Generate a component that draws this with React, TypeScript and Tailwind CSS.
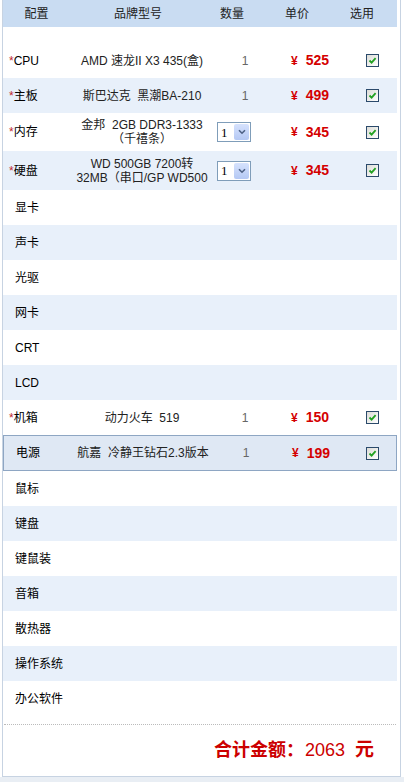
import React from "react";

type Row = {
  name: string;
  star?: boolean;
  product?: string[];
  qty?: string;
  select?: boolean;
  price?: string;
  checked?: boolean;
  h: string;
};

const rows: Row[] = [
  { name: "CPU", star: true, product: ["AMD 速龙II X3 435(盒)"], qty: "1", price: "525", checked: true, h: "h-[35px]" },
  { name: "主板", star: true, product: ["斯巴达克  黑潮BA-210"], qty: "1", price: "499", checked: true, h: "h-[35px]" },
  { name: "内存", star: true, product: ["金邦  2GB DDR3-1333", "（千禧条）"], select: true, price: "345", checked: true, h: "h-[38px]" },
  { name: "硬盘", star: true, product: ["WD 500GB 7200转", "32MB（串口/GP WD500"], select: true, price: "345", checked: true, h: "h-[39px]" },
  { name: "显卡", h: "h-[35px]" },
  { name: "声卡", h: "h-[35px]" },
  { name: "光驱", h: "h-[35px]" },
  { name: "网卡", h: "h-[35px]" },
  { name: "CRT", h: "h-[35px]" },
  { name: "LCD", h: "h-[35px]" },
  { name: "机箱", star: true, product: ["动力火车  519"], qty: "1", price: "150", checked: true, h: "h-[35px]" },
  { name: "电源", product: ["航嘉  冷静王钻石2.3版本"], qty: "1", price: "199", checked: true, h: "h-[36px]" },
  { name: "鼠标", h: "h-[35px]" },
  { name: "键盘", h: "h-[35px]" },
  { name: "键鼠装", h: "h-[35px]" },
  { name: "音箱", h: "h-[35px]" },
  { name: "散热器", h: "h-[35px]" },
  { name: "操作系统", h: "h-[35px]" },
  { name: "办公软件", h: "h-[35px]" },
];

function CheckBox() {
  return (
    <span className="inline-flex h-[13px] w-[13px] items-center justify-center border border-[#2b4a6b] bg-gradient-to-br from-[#dcdcd7] to-[#ffffff]">
      <svg width="9" height="9" viewBox="0 0 9 9">
        <path d="M1.5 4.5 L3.6 6.6 L7.6 2.2" fill="none" stroke="#21a121" strokeWidth="1.8" />
      </svg>
    </span>
  );
}

function Select() {
  return (
    <div className="ml-[3px] flex h-[20px] w-[34px] items-center border border-[#7f9db9] bg-white">
      <span className="flex-1 pl-[3px] text-[13px] leading-none text-black" style={{ fontFamily: '"Liberation Serif", serif' }}>
        1
      </span>
      <span className="mr-[1px] flex h-[16px] w-[15px] items-center justify-center rounded-[2px] bg-gradient-to-b from-[#d6e2fd] to-[#b4c8f4]">
        <svg width="8" height="6" viewBox="0 0 8 6">
          <path d="M1 1.2 L4 4.2 L7 1.2" fill="none" stroke="#4d6185" strokeWidth="1.6" />
        </svg>
      </span>
    </div>
  );
}

export default function App() {
  return (
    <div
      className="min-h-[782px] w-[404px] bg-white text-[12px] text-[#222]"
      style={{ fontFamily: '"Liberation Sans", "Noto Sans CJK SC", sans-serif' }}
    >
      <div className="ml-[2px] box-border w-[399px] border border-t-0 border-[#c7d3e2] pr-[3px]">
        {/* header */}
        <div className="flex h-[27px] items-center bg-[#c9dcf2] text-[12px] text-[#222]">
          <div className="w-[67px] text-center">配置</div>
          <div className="w-[136px] text-center">品牌型号</div>
          <div className="w-[52px] text-center">数量</div>
          <div className="w-[78px] text-center">单价</div>
          <div className="w-[52px] text-center">选用</div>
        </div>
        <div className="h-[16px]" />
        {rows.map((r, i) => {
          const special = r.name === "电源";
          const bg = special
            ? "bg-[#dfe8f4] border border-[#8ea6c3]"
            : i % 2 === 1
            ? "bg-[#e8f0fa]"
            : "bg-white";
          return (
            <div key={r.name} className={`flex items-center ${r.h} ${bg}`}>
              <div className={`w-[67px] shrink-0 ${r.star ? "pl-[6px]" : "pl-[12px]"} text-black`}>
                {r.star && <span className="text-[#c0282d]">*</span>}
                {r.name}
              </div>
              <div className="w-[144px] shrink-0 overflow-hidden text-center leading-[14px] text-[#222]">
                {r.product?.map((p) => (
                  <div key={p} className="whitespace-pre">
                    {p}
                  </div>
                ))}
              </div>
              <div className="w-[62px] shrink-0">
                {r.select ? (
                  <Select />
                ) : r.qty ? (
                  <div className="text-center text-[#666]">{r.qty}</div>
                ) : null}
              </div>
              <div className="flex w-[68px] shrink-0 items-center justify-center font-bold text-[#d40000]">
                {r.price && (
                  <>
                    <span className="mr-[8px] text-[12px]">¥</span>
                    <span className="text-[14px]">{r.price}</span>
                  </>
                )}
              </div>
              <div className="flex flex-1 items-center justify-center pl-[3px]">{r.checked && <CheckBox />}</div>
            </div>
          );
        })}
        <div className="h-[8px]" />
        <div className="mx-[1px] border-t border-dotted border-[#bbbbbb]" />
        <div className="flex h-[51px] items-center justify-end pr-[23px] text-[#cc0000]">
          <span className="text-[18px] font-bold">合计金额：</span>
          <span className="ml-[1px] text-[18px]">2063</span>
          <span className="ml-[10px] text-[19px] font-bold">元</span>
        </div>
      </div>
      <div className="h-[5px] bg-[#e9eef4]" />
    </div>
  );
}
